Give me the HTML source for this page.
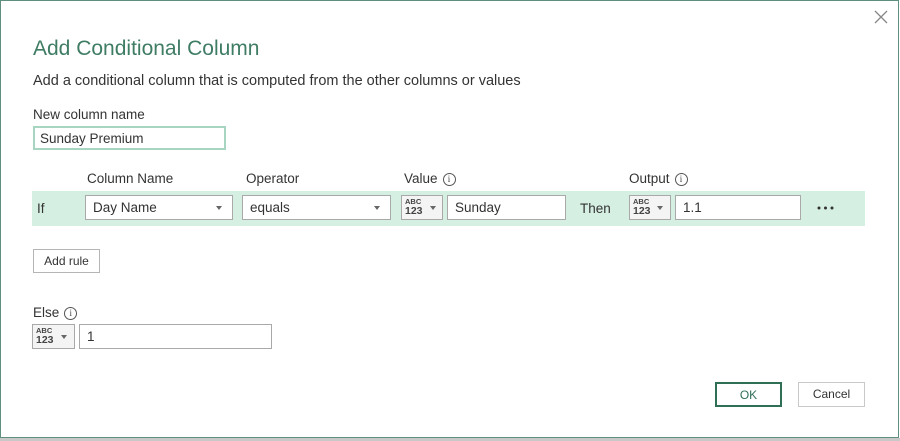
<!DOCTYPE html>
<html><head><style>
*{box-sizing:border-box;margin:0;padding:0}
body{width:900px;height:441px;background:#fff;position:relative;overflow:hidden;font-family:"Liberation Sans","DejaVu Sans",sans-serif;color:#333}
.dlg{position:absolute;left:0;top:0;width:899px;height:438px;border:1.5px solid #5f8f7f;background:#fff}
.a{position:absolute;white-space:nowrap}
.box{position:absolute;border:1px solid #a9a9a9;background:#fff;font-size:13.5px;padding-left:7px;line-height:23px;color:#333}
.arr{position:absolute;width:0;height:0;border-left:3.5px solid transparent;border-right:3.5px solid transparent;border-top:4px solid #666}
.typ{position:absolute;border:1px solid #a9a9a9;background:#f4f4f4}
.typ .t1{position:absolute;left:3px;top:2px;font-size:7.5px;font-weight:bold;color:#444;line-height:8px}
.typ .t2{position:absolute;left:3px;top:10px;font-size:10.5px;font-weight:bold;color:#444;line-height:11px}
.i{display:inline-block;width:13px;height:13px;border:1px solid #555;border-radius:50%;font-size:9px;line-height:11px;text-align:center;vertical-align:1px;margin-left:5px;color:#444;font-family:"Liberation Serif",serif}
.btn{position:absolute;border:1px solid #b5b5b5;background:#fff;font-size:12px;text-align:center;color:#333}
</style></head><body>
<div style="position:absolute;left:0;top:438px;width:900px;height:3px;background:#c8c8c8"></div>
<div class="dlg"></div>
<svg style="position:absolute;left:874px;top:10px" width="14" height="14"><path d="M1 1L13 13M13 1L1 13" stroke="#888" stroke-width="1.3"/></svg>
<div class="a" style="left:33px;top:37px;font-size:21px;color:#3f7c64">Add Conditional Column</div>
<div class="a" style="left:33px;top:73px;font-size:14.5px;color:#333">Add a conditional column that is computed from the other columns or values</div>
<div class="a" style="left:33px;top:107px;font-size:13.5px">New column name</div>
<div class="box" style="left:33px;top:126px;width:193px;height:24px;border:2px solid #a8d5c2;padding-left:5px;line-height:21px">Sunday Premium</div>

<div class="a" style="left:87px;top:171px;font-size:13.5px">Column Name</div>
<div class="a" style="left:246px;top:171px;font-size:13.5px">Operator</div>
<div class="a" style="left:404px;top:171px;font-size:13.5px">Value<span class="i">i</span></div>
<div class="a" style="left:629px;top:171px;font-size:13.5px">Output<span class="i">i</span></div>

<div style="position:absolute;left:32px;top:191px;width:833px;height:35px;background:#d5efe3"></div>
<div class="a" style="left:37px;top:201px;font-size:13.5px">If</div>
<div class="box" style="left:85px;top:195px;width:148px;height:25px">Day Name</div><div class="arr" style="left:216px;top:206px"></div>
<div class="box" style="left:242px;top:195px;width:149px;height:25px">equals</div><div class="arr" style="left:374px;top:206px"></div>
<div class="typ" style="left:401px;top:195px;width:42px;height:25px"><span class="t1">ABC</span><span class="t2">123</span></div><div class="arr" style="left:430px;top:206px"></div>
<div class="box" style="left:447px;top:195px;width:119px;height:25px">Sunday</div>
<div class="a" style="left:580px;top:201px;font-size:13.5px">Then</div>
<div class="typ" style="left:629px;top:195px;width:42px;height:25px"><span class="t1">ABC</span><span class="t2">123</span></div><div class="arr" style="left:657px;top:206px"></div>
<div class="box" style="left:675px;top:195px;width:126px;height:25px">1.1</div>
<svg style="position:absolute;left:817px;top:206px" width="18" height="4"><circle cx="2" cy="2" r="1.5" fill="#333"/><circle cx="8.5" cy="2" r="1.5" fill="#333"/><circle cx="15" cy="2" r="1.5" fill="#333"/></svg>

<div class="btn" style="left:33px;top:249px;width:67px;height:24px;line-height:22px">Add rule</div>
<div class="a" style="left:33px;top:305px;font-size:13.5px">Else<span class="i">i</span></div>
<div class="typ" style="left:32px;top:324px;width:43px;height:25px"><span class="t1">ABC</span><span class="t2">123</span></div><div class="arr" style="left:61px;top:335px"></div>
<div class="box" style="left:79px;top:324px;width:193px;height:25px">1</div>

<div class="btn" style="left:715px;top:382px;width:67px;height:25px;line-height:23px;border:2px solid #2f6f56;color:#2f6f56">OK</div>
<div class="btn" style="left:798px;top:382px;width:67px;height:25px;line-height:23px;border:1.5px solid #c9c9c9">Cancel</div>
</body></html>
